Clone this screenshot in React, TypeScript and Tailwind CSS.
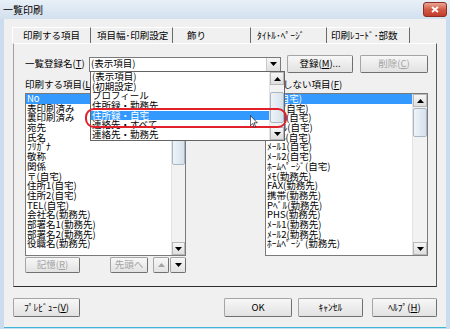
import React from 'react';

const leftItems = [
  'No', '表印刷済み', '裏印刷済み', '宛先', '氏名', 'ﾌﾘｶﾞﾅ', '敬称', '関係',
  '〒(自宅)', '住所1(自宅)', '住所2(自宅)', 'TEL(自宅)',
  '会社名(勤務先)', '部署名1(勤務先)', '部署名2(勤務先)', '役職名(勤務先)',
];

const rightItems = [
  'ﾒﾓ(自宅)', 'FAX(自宅)', '携帯(自宅)', 'Pﾍﾞﾙ(自宅)', 'PHS(自宅)', 'ﾒｰﾙ1(自宅)', 'ﾒｰﾙ2(自宅)', 'ﾎｰﾑﾍﾟｰｼﾞ(自宅)',
  'ﾒﾓ(勤務先)', 'FAX(勤務先)', '携帯(勤務先)', 'Pﾍﾞﾙ(勤務先)', 'PHS(勤務先)', 'ﾒｰﾙ1(勤務先)', 'ﾒｰﾙ2(勤務先)', 'ﾎｰﾑﾍﾟｰｼﾞ(勤務先)',
];

const comboItems = ['(表示項目)', '(初期設定)', 'プロフィール', '住所録・勤務先', '住所録・自宅', '連絡先・すべて', '連絡先・勤務先'];

const tabs = [
  { label: '印刷する項目', cls: 'w-[79px] pl-[10px]' },
  { label: '項目幅･印刷設定', cls: 'w-[82px] pl-[6px]' },
  { label: '飾り', cls: 'w-[78px] pl-[14px]' },
  { label: 'ﾀｲﾄﾙ･ﾍﾟｰｼﾞ', cls: 'w-[76px] pl-[6px]' },
  { label: '印刷ﾚｺｰﾄﾞ･部数', cls: 'w-[83px] pl-[4px]' },
];

function U({ c }: { c: string }) {
  return <span className="underline underline-offset-1">{c}</span>;
}

function Tri({ up }: { up?: boolean }) {
  return (
    <svg width="7" height="4" viewBox="0 0 7 4">
      <path d={up ? 'M0 4L3.5 0L7 4Z' : 'M0 0L7 0L3.5 4Z'} fill="currentColor" />
    </svg>
  );
}

function Btn({ children, disabled, className = '' }: { children: React.ReactNode; disabled?: boolean; className?: string }) {
  return (
    <div
      className={`flex items-center justify-center rounded-[2px] border border-[#a5a5a5] border-r-[#707070] border-b-[#707070] bg-linear-to-b from-[#f7f7f7] to-[#e2e2e2] text-[9.5px] leading-none whitespace-nowrap ${
        disabled ? 'text-[#a3a3a3]' : 'text-black'
      } ${className}`}
    >
      {children}
    </div>
  );
}

function ScrollBtn({ up, className = '' }: { up?: boolean; className?: string }) {
  return (
    <div className={`h-[13px] shrink-0 flex items-center justify-center border border-[#b8b8b8] bg-linear-to-b from-[#f6f6f6] to-[#dedede] text-black ${className}`}>
      <Tri up={up} />
    </div>
  );
}

function ScrollBar({ gap, thumb, className = '' }: { gap: string; thumb: string; className?: string }) {
  return (
    <div className={`flex flex-col bg-[#f2f2f2] border-l border-[#e3e3e3] ${className}`}>
      <ScrollBtn up />
      <div className={gap} />
      <div className={`${thumb} shrink-0 border border-[#a9b6c4] rounded-[2px] bg-linear-to-r from-[#eef3f8] to-[#d6e1ec]`} />
      <div className="flex-1" />
      <ScrollBtn />
    </div>
  );
}

function ListBox({ items, sel, className = '', children }: { items: string[]; sel: number; className?: string; children?: React.ReactNode }) {
  return (
    <div className={`flex border border-[#7a7a7a] bg-white ${className}`}>
      <div className="flex-1 min-w-0 overflow-hidden text-[9.5px]">
        {items.map((t, i) => (
          <div
            key={i}
            className={`h-[9.7px] leading-[9.7px] pl-[1px] whitespace-nowrap ${i === sel ? 'bg-[#3399ff] text-white' : ''}`}
          >
            {t}
          </div>
        ))}
      </div>
      {children}
    </div>
  );
}

export default function App() {
  return (
    <div className="relative w-[450px] h-[329px] overflow-hidden flex flex-col bg-[#cadcee] font-['Noto_Sans_CJK_JP',sans-serif] text-black">
      {/* title bar */}
      <div className="h-[19px] shrink-0 flex items-center justify-between pl-[3px] pr-[3px] bg-linear-to-b from-[#e8f0f8] to-[#d2e0ee]">
        <span className="text-[10px] leading-none">一覧印刷</span>
        <div className="w-[24px] h-[15px] rounded-[3px] border border-[#8b2f25] bg-linear-to-b from-[#e9a596] via-[#d25a44] to-[#c23b2c] flex items-center justify-center">
          <svg width="8" height="7" viewBox="0 0 8 7">
            <path d="M1 1L7 6M7 1L1 6" stroke="white" strokeWidth="1.8" />
          </svg>
        </div>
      </div>

      {/* client */}
      <div className="flex-1 mx-[4px] mb-[1px] bg-[#f0f0f0] border-b border-[#3fb6d8] flex flex-col">
        {/* tabs */}
        <div className="flex pl-[8px] pt-[8px] h-[24px] shrink-0">
          {tabs.map((t, i) => (
            <div
              key={i}
              className={`${t.cls} h-[16px] flex items-center text-[9.5px] leading-none whitespace-nowrap border-r border-[#6a6a6a] ${
                i === 0 ? 'border-l border-l-white border-t border-t-white' : 'border-t border-t-white'
              }`}
            >
              {t.label}
            </div>
          ))}
        </div>

        {/* tab panel */}
        <div className="ml-[9px] w-[424px] h-[244px] shrink-0 border border-t-white border-l-[#a0a0a0] border-r-[#5a5a5a] border-b-[#2e2e2e] flex flex-col pl-[11px] pt-[11px]">
          <div className="flex items-center h-[18px] text-[9.5px] leading-none">
            <span className="w-[64px] whitespace-nowrap">
              一覧登録名(<U c="T" />)
            </span>
            <div className="w-[192px] h-[15px] border border-[#7a7a7a] bg-white flex items-center">
              <span className="flex-1 pl-[1px] whitespace-nowrap">(表示項目)</span>
              <div className="w-[14px] h-full border-l border-[#c8c8c8] bg-linear-to-b from-[#f6f6f6] to-[#dedede] flex items-center justify-center">
                <Tri />
              </div>
            </div>
            <Btn className="ml-[6px] w-[66px] h-[18px]">
              登録(<U c="M" />)...
            </Btn>
            <Btn disabled className="ml-[7px] w-[68px] h-[18px]">
              削除(<U c="C" />)
            </Btn>
          </div>

          <div className="flex mt-[7px] h-[10px] items-center text-[9.5px] leading-none">
            <span className="w-[239px] whitespace-nowrap">
              印刷する項目(<U c="L" />)
            </span>
            <span className="whitespace-nowrap">
              印刷しない項目(<U c="F" />)
            </span>
          </div>

          <div className="flex mt-[3px] h-[163px]">
            <ListBox items={leftItems} sel={0} className="w-[161px]">
              <ScrollBar className="w-[14px]" gap="h-[1px]" thumb="h-[57px]" />
            </ListBox>
            <ListBox items={rightItems} sel={0} className="ml-[79px] w-[163px]">
              <ScrollBar className="w-[15px]" gap="h-[1px]" thumb="h-[29px]" />
            </ListBox>
          </div>

          <div className="flex mt-[1px] h-[16px]">
            <Btn disabled className="w-[55px] h-full">
              記憶(<U c="R" />)
            </Btn>
            <Btn disabled className="ml-[30px] w-[38px] h-full">
              先頭へ
            </Btn>
            <Btn disabled className="ml-[5px] w-[16px] h-full">
              <Tri up />
            </Btn>
            <Btn className="ml-[1px] w-[16px] h-full">
              <Tri />
            </Btn>
          </div>
        </div>

        {/* bottom buttons */}
        <div className="flex mt-[11px] pl-[9px] h-[19px]">
          <Btn className="w-[67px] h-full">
            ﾌﾟﾚﾋﾞｭｰ(<U c="V" />)
          </Btn>
          <Btn className="ml-[144px] w-[68px] h-full border-[#5a5a5a]">OK</Btn>
          <Btn className="ml-[6px] w-[65px] h-full">ｷｬﾝｾﾙ</Btn>
          <Btn className="ml-[9px] w-[65px] h-full">
            ﾍﾙﾌﾟ(<U c="H" />)
          </Btn>
        </div>
      </div>

      {/* open combo list */}
      <div className="absolute left-[90px] top-[71px] w-[195px] h-[70px] border border-[#646464] bg-white flex">
        <div className="flex-1 min-w-0 text-[9.5px]">
          {comboItems.map((t, i) => (
            <div
              key={i}
              className={`h-[9.7px] leading-[9.7px] pl-[1px] whitespace-nowrap ${i === 4 ? 'bg-[#3399ff] text-white' : ''}`}
            >
              {t}
            </div>
          ))}
        </div>
        <ScrollBar className="w-[15px]" gap="h-[7px]" thumb="h-[31px]" />
      </div>

      {/* red highlight mark */}
      <div className="absolute left-[85px] top-[108px] w-[202px] h-[20px] border-2 border-[#e0202a] rounded-[9px]" />

      {/* mouse cursor */}
      <svg className="absolute left-[250px] top-[115px]" width="8" height="13" viewBox="0 0 12 19">
        <path d="M0.5 0.5L0.5 16L4 12.5L6.5 18L8.5 17L6 11.5L11 11.5Z" fill="white" stroke="black" strokeWidth="1" />
      </svg>
    </div>
  );
}
